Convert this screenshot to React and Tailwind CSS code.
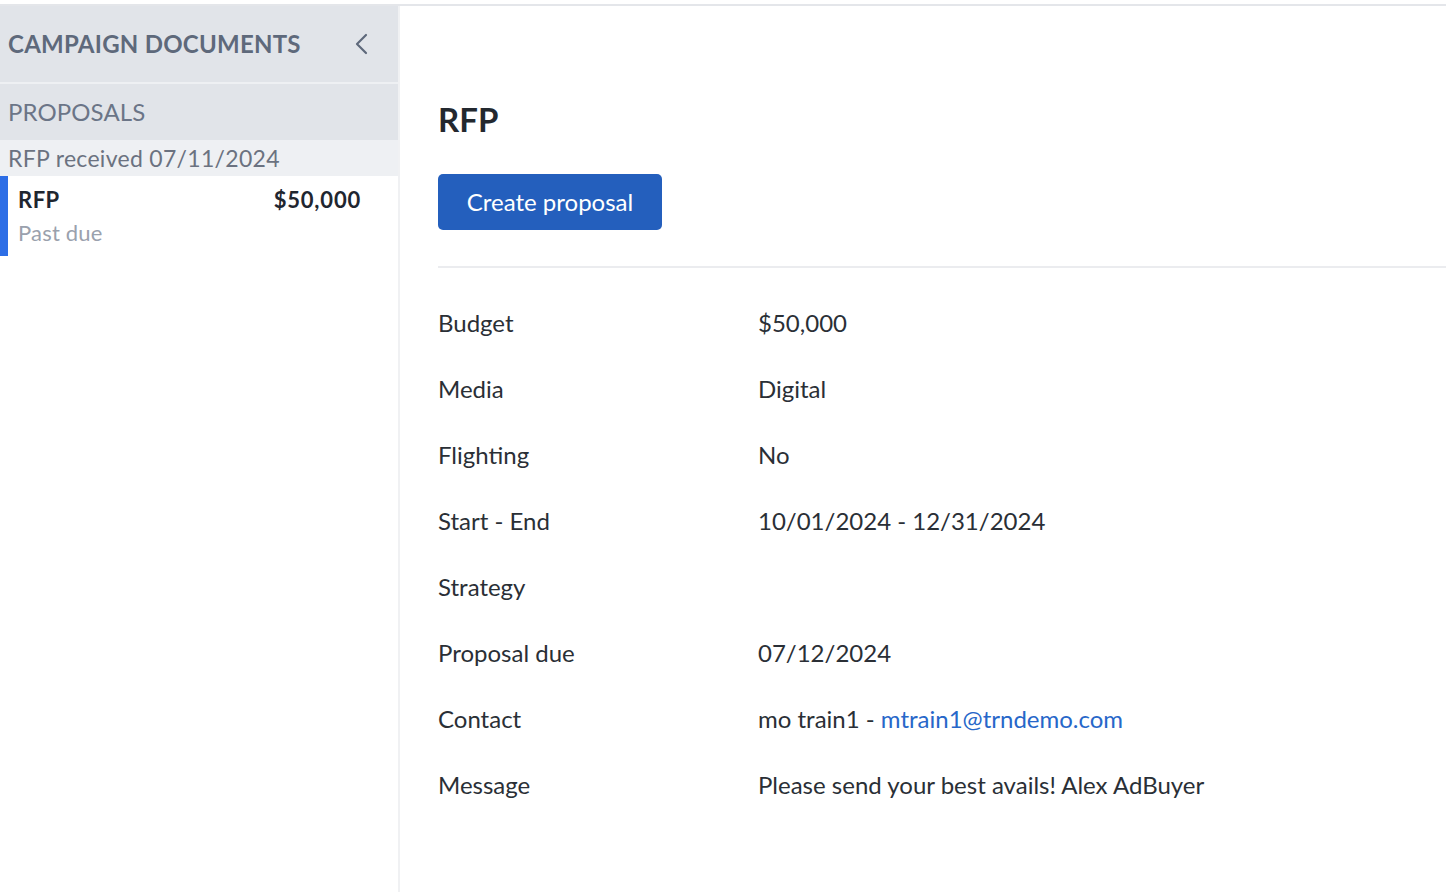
import React from 'react';

const details = [
  { label: 'Budget', value: '$50,000' },
  { label: 'Media', value: 'Digital' },
  { label: 'Flighting', value: 'No' },
  { label: 'Start - End', value: '10/01/2024 - 12/31/2024' },
  { label: 'Strategy', value: '' },
  { label: 'Proposal due', value: '07/12/2024' },
  { label: 'Contact', value: 'contact' },
  { label: 'Message', value: 'Please send your best avails! Alex AdBuyer' },
];

const Sidebar = () => (
  <aside className="w-[400px] shrink-0 border-r-2 border-[#f0f1f3] flex flex-col">
    <div className="h-[76px] bg-[#e1e4e9] flex items-center justify-between pl-2 pr-[28px]">
      <h2 className="text-[24px] font-bold text-[#5e697b] tracking-[0.25px]">
        CAMPAIGN DOCUMENTS
      </h2>
      <svg width="16" height="22" viewBox="0 0 16 22" fill="none">
        <path
          d="M12 2 L3 11 L12 20"
          stroke="#5e697b"
          strokeWidth="2.2"
          strokeLinecap="round"
          strokeLinejoin="round"
        />
      </svg>
    </div>
    <div className="h-[2px] bg-[#eef0f3]" />
    <div className="h-[56px] bg-[#e1e4e9] flex items-center pl-2">
      <span className="text-[24px] text-[#6b7587] tracking-[0.1px]">PROPOSALS</span>
    </div>
    <div className="h-[36px] bg-[#eef0f3] flex items-center pl-2">
      <span className="text-[23px] text-[#6b7280] tracking-[0.3px]">RFP received 07/11/2024</span>
    </div>
    <div className="h-[80px] border-l-8 border-[#2d6ee6] bg-white pl-[10px] pr-[37px] flex flex-col justify-center">
      <div className="flex items-center justify-between">
        <span className="text-[22px] font-bold text-[#1f2630] tracking-[0.5px]">RFP</span>
        <span className="text-[22px] font-bold text-[#1f2630] tracking-[0.8px]">$50,000</span>
      </div>
      <span className="text-[22px] text-[#9aa1ad] tracking-[0.2px]">Past due</span>
    </div>
  </aside>
);

export default function App() {
  return (
    <div className="min-h-screen bg-white pt-1 font-['Lato',sans-serif]">
      <div className="border-t-2 border-[#e4e6ea] flex h-[888px]">
        <Sidebar />
        <main className="flex-1 pl-[38px] pt-[93px]">
          <h1 className="text-[33px] leading-[40px] font-bold text-[#23282f]">RFP</h1>
          <button className="mt-[35px] h-[56px] w-[224px] rounded-[5px] bg-[#245fbd] text-white text-[24px]">
            Create proposal
          </button>
          <div className="mt-[36px] border-t-2 border-[#ebecef]" />
          <div className="pt-[22px]">
            {details.map((row) => (
              <div key={row.label} className="h-[66px] flex items-center text-[24px] text-[#2a2f36]">
                <span className="w-[320px] shrink-0">{row.label}</span>
                {row.value === 'contact' ? (
                  <span>
                    mo train1 -{' '}
                    <a href="#" className="text-[#2767c9]">
                      mtrain1@trndemo.com
                    </a>
                  </span>
                ) : (
                  <span>{row.value}</span>
                )}
              </div>
            ))}
          </div>
        </main>
      </div>
    </div>
  );
}
